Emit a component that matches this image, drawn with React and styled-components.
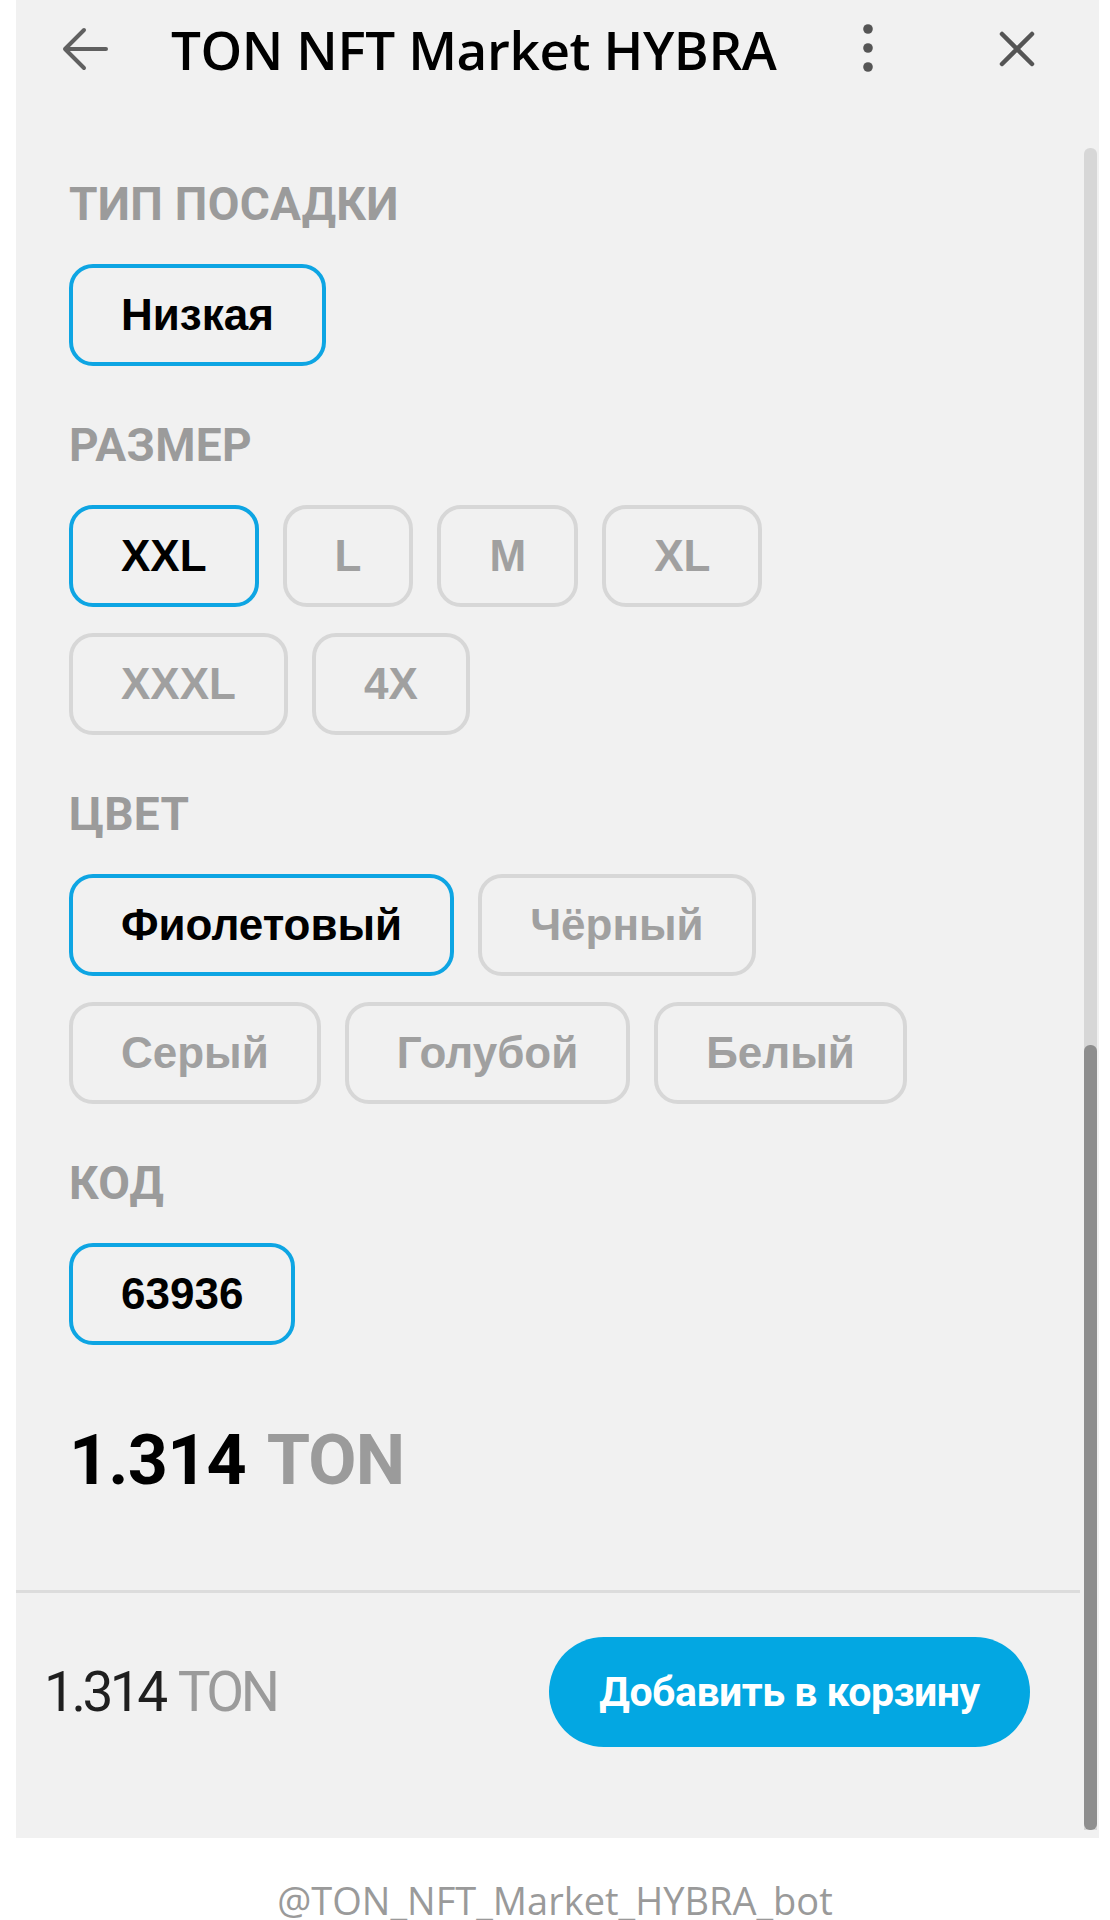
import React from "react";
import styled, { createGlobalStyle } from "styled-components";

const GlobalStyle = createGlobalStyle`
  body {
    margin: 0;
    background: #ffffff;
    font-family: Roboto, "Noto Sans", sans-serif;
  }
`;

const Page = styled.div`
  width: 1110px;
  height: 1920px;
  overflow: hidden;
  background: #ffffff;
`;

const Panel = styled.div`
  margin-left: 16px;
  width: 1083px;
  height: 1838px;
  background: #f1f1f1;
  display: flex;
  flex-direction: column;
`;

const Header = styled.div`
  height: 98px;
  flex-shrink: 0;
  display: flex;
  align-items: center;
  padding: 0 64px 0 46px;
`;

const IconButton = styled.div`
  display: flex;
  align-items: center;
  justify-content: center;
  margin-left: ${(p) => p.$ml || 0}px;
`;

const Title = styled.div`
  flex: 1;
  margin-left: 63px;
  font-family: "Open Sans", "Noto Sans", sans-serif;
  font-weight: 600;
  font-size: 53px;
  letter-spacing: -0.4px;
  line-height: 1;
  color: #000000;
  white-space: nowrap;
`;

const Body = styled.div`
  flex: 1;
  display: flex;
  min-height: 0;
`;

const MainColumn = styled.div`
  flex: 1;
  display: flex;
  flex-direction: column;
`;

const Content = styled.div`
  flex: 1;
  padding: 83px 100px 0 53px;
`;

const Section = styled.div`
  margin-bottom: 56px;
`;

const Label = styled.div`
  font-size: 46px;
  line-height: 46px;
  font-weight: 700;
  color: #9b9b9b;
  letter-spacing: 0.3px;
  margin-bottom: 37px;
`;

const ChipRow = styled.div`
  display: flex;
  flex-wrap: wrap;
  gap: 26px 24px;
`;

const Chip = styled.div`
  box-sizing: border-box;
  height: 102px;
  padding: 0 48px;
  display: inline-flex;
  align-items: center;
  border-radius: 24px;
  border: 4px solid ${(p) => (p.$active ? "#0ea5e3" : "#d7d7d7")};
  color: ${(p) => (p.$active ? "#000000" : "#a0a0a0")};
  font-family: "Liberation Sans", Arial, sans-serif;
  font-size: 44px;
  font-weight: 700;
  line-height: 1;
  white-space: nowrap;
`;

const Price = styled.div`
  margin-top: 80px;
  font-size: 70px;
  line-height: 70px;
  font-weight: 700;
  letter-spacing: -0.8px;
  color: #000000;
`;

const Currency = styled.span`
  color: #9b9b9b;
  margin-left: 6px;
`;

const Divider = styled.div`
  height: 3px;
  background: #dcdcdc;
  margin-right: 4px;
`;

const FooterBar = styled.div`
  height: 245px;
  box-sizing: border-box;
  padding: 44px 54px 91px 28px;
  display: flex;
  align-items: center;
  justify-content: space-between;
`;

const FooterPrice = styled.div`
  font-size: 55px;
  font-weight: 400;
  letter-spacing: -3.5px;
  color: #1f1f1f;
`;

const FooterCurrency = styled.span`
  color: #9b9b9b;
  margin-left: 4px;
`;

const AddButton = styled.button`
  width: 481px;
  height: 110px;
  padding: 0;
  border: none;
  border-radius: 55px;
  background: #03a7e2;
  color: #ffffff;
  font-family: Roboto, "Noto Sans", sans-serif;
  font-size: 41px;
  font-weight: 700;
  letter-spacing: -0.5px;
  cursor: pointer;
`;

const ScrollTrack = styled.div`
  width: 13px;
  margin: 50px 2px 8px 0;
  background: #d7d7d7;
  border-radius: 6px 6px 0 0;
  display: flex;
  flex-direction: column;
  justify-content: flex-end;
`;

const ScrollThumb = styled.div`
  height: 785px;
  background: #8e8e8e;
  border-radius: 6px;
`;

const BotName = styled.div`
  margin-top: 43px;
  text-align: center;
  font-family: "Open Sans", "Noto Sans", sans-serif;
  font-size: 38px;
  line-height: 1;
  color: #9a9a9a;
`;

const sections = [
  { title: "ТИП ПОСАДКИ", options: ["Низкая"], active: "Низкая" },
  { title: "РАЗМЕР", options: ["XXL", "L", "M", "XL", "XXXL", "4X"], active: "XXL" },
  {
    title: "ЦВЕТ",
    options: ["Фиолетовый", "Чёрный", "Серый", "Голубой", "Белый"],
    active: "Фиолетовый",
  },
  { title: "КОД", options: ["63936"], active: "63936" },
];

function BackIcon() {
  return (
    <svg width="46" height="44" viewBox="0 0 46 44" fill="none">
      <path
        d="M44 22H3M22 3L3 22l19 19"
        stroke="#606060"
        strokeWidth="4"
        strokeLinecap="round"
        strokeLinejoin="round"
      />
    </svg>
  );
}

function MoreIcon() {
  return (
    <svg width="16" height="56" viewBox="0 0 16 56">
      <circle cx="8" cy="8" r="4.8" fill="#555555" />
      <circle cx="8" cy="27" r="4.8" fill="#555555" />
      <circle cx="8" cy="46" r="4.8" fill="#555555" />
    </svg>
  );
}

function CloseIcon() {
  return (
    <svg width="36" height="36" viewBox="0 0 36 36" fill="none">
      <path
        d="M3 3l30 30M33 3L3 33"
        stroke="#555555"
        strokeWidth="4.5"
        strokeLinecap="round"
      />
    </svg>
  );
}

export default function App() {
  return (
    <Page>
      <GlobalStyle />
      <Panel>
        <Header>
          <IconButton>
            <BackIcon />
          </IconButton>
          <Title>TON NFT Market HYBRA</Title>
          <IconButton>
            <MoreIcon />
          </IconButton>
          <IconButton $ml={123}>
            <CloseIcon />
          </IconButton>
        </Header>
        <Body>
          <MainColumn>
            <Content>
              {sections.map((s) => (
                <Section key={s.title}>
                  <Label>{s.title}</Label>
                  <ChipRow>
                    {s.options.map((o) => (
                      <Chip key={o} $active={o === s.active}>
                        {o}
                      </Chip>
                    ))}
                  </ChipRow>
                </Section>
              ))}
              <Price>
                1.314<Currency> TON</Currency>
              </Price>
            </Content>
            <Divider />
            <FooterBar>
              <FooterPrice>
                1.314<FooterCurrency> TON</FooterCurrency>
              </FooterPrice>
              <AddButton>Добавить в корзину</AddButton>
            </FooterBar>
          </MainColumn>
          <ScrollTrack>
            <ScrollThumb />
          </ScrollTrack>
        </Body>
      </Panel>
      <BotName>@TON_NFT_Market_HYBRA_bot</BotName>
    </Page>
  );
}
